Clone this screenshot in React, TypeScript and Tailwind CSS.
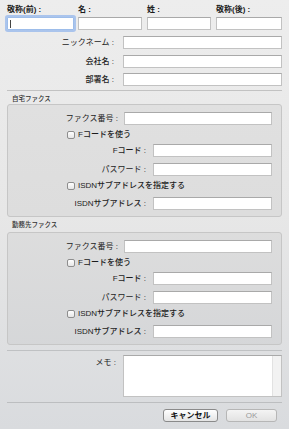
import React from "react";

const font = { fontFamily: '"Liberation Sans", "Noto Sans CJK JP", sans-serif' };

function Input({ className = "" }: { className?: string }) {
  return (
    <div
      className={
        "h-[13px] bg-white border border-[#c2c2c2] border-t-[#a9a9a9] " + className
      }
    />
  );
}

function Check({ label }: { label: string }) {
  return (
    <div className="flex items-center h-[10px] ml-[59px]">
      <div className="w-[8px] h-[8px] rounded-[2px] border border-[#8e8e8e] bg-gradient-to-b from-white to-[#e6e6e6]" />
      <span className="ml-[3px] text-[8px] leading-[10px] font-medium text-[#1c1c1c]">{label}</span>
    </div>
  );
}

function Row({ label, lw, gap, className = "" }: { label: string; lw: number; gap: number; className?: string }) {
  return (
    <div className={"flex items-center " + className}>
      <div
        className="text-right text-[8px] leading-[10px] text-[#1c1c1c] whitespace-nowrap shrink-0"
        style={{ width: lw, marginRight: gap }}
      >
        {label}
      </div>
      <Input className="flex-1" />
    </div>
  );
}

function FaxBox() {
  return (
    <div className="rounded-[3px] border border-[#c6c6c6] bg-black/[0.04] pt-[7px] pb-[6px] pr-[9px]">
      <Row label="ファクス番号 :" lw={110} gap={6} />
      <div className="mt-[5px]">
        <Check label="Fコードを使う" />
      </div>
      <Row label="Fコード :" lw={138} gap={7} className="mt-[4px] font-medium" />
      <Row label="パスワード :" lw={138} gap={7} className="mt-[6px]" />
      <div className="mt-[5px]">
        <Check label="ISDNサブアドレスを指定する" />
      </div>
      <Row label="ISDNサブアドレス :" lw={138} gap={7} className="mt-[6px] font-medium" />
    </div>
  );
}

export default function App() {
  return (
    <div
      style={font}
      className="w-[289px] h-[429px] overflow-hidden bg-gradient-to-b from-[#ededed] via-[#e7e7e7] to-[#d9dbde] px-[7px] pt-[5px] text-[#1c1c1c]"
    >
      {/* name row */}
      <div className="flex text-[8px] leading-[10px] font-semibold h-[10px]">
        <div className="w-[67px]">敬称(前) :</div>
        <div className="w-[64px] ml-[4px]">名 :</div>
        <div className="w-[64px] ml-[5px]">姓 :</div>
        <div className="w-[66px] ml-[5px]">敬称(後) :</div>
      </div>
      <div className="flex mt-[2px]">
        <div className="w-[67px] h-[13px] bg-white border border-[#9dbdea] ring-2 ring-[#a3c0ec]/90 rounded-[1px] relative">
          <div className="absolute left-[2px] top-[2px] w-px h-[8px] bg-[#444]" />
        </div>
        <Input className="w-[64px] ml-[4px]" />
        <Input className="w-[64px] ml-[5px]" />
        <Input className="w-[66px] ml-[5px]" />
      </div>

      <Row label="ニックネーム :" lw={107} gap={9} className="mt-[6px]" />
      <Row label="会社名 :" lw={107} gap={9} className="mt-[6px] font-medium" />
      <Row label="部署名 :" lw={107} gap={9} className="mt-[5px] font-medium" />

      <div className="mt-[4px] h-px bg-[#c2c2c2]" />

      <div className="mt-[4px] h-[8px] text-[6.5px] leading-[8px] pl-[5px] text-[#333] font-medium">自宅ファクス</div>
      <div className="mt-[1px]">
        <FaxBox />
      </div>

      <div className="mt-[4px] h-[8px] text-[6.5px] leading-[8px] pl-[5px] text-[#333] font-medium">勤務先ファクス</div>
      <div className="mt-[3px]">
        <FaxBox />
      </div>

      <div className="mt-[5px] h-px bg-[#bfc1c3]" />

      <div className="flex mt-[4px]">
        <div className="w-[109px] mr-[7px] text-right text-[8px] leading-[10px] pt-[3px]">メモ :</div>
        <div className="flex-1 h-[42px] bg-white border border-[#c2c2c2] border-t-[#a9a9a9] flex justify-end">
          <div className="w-[9px] h-full bg-[#f2f2f2] border-l border-[#e2e2e2]" />
        </div>
      </div>

      <div className="mt-[5px] h-px bg-[#bcbec0]" />

      <div className="flex justify-end mt-[6px] pr-[5px]">
        <div className="w-[55px] h-[13px] rounded-[3px] border border-[#8a8a8a] bg-gradient-to-b from-white to-[#e4e4e4] text-[8px] leading-[11px] font-bold text-center text-[#111]">
          キャンセル
        </div>
        <div className="w-[51px] h-[13px] ml-[8px] rounded-[3px] border border-[#b6b6b6] bg-gradient-to-b from-[#f4f4f4] to-[#e2e2e2] text-[8px] leading-[11px] text-center text-[#9a9a9a]">
          OK
        </div>
      </div>
    </div>
  );
}
